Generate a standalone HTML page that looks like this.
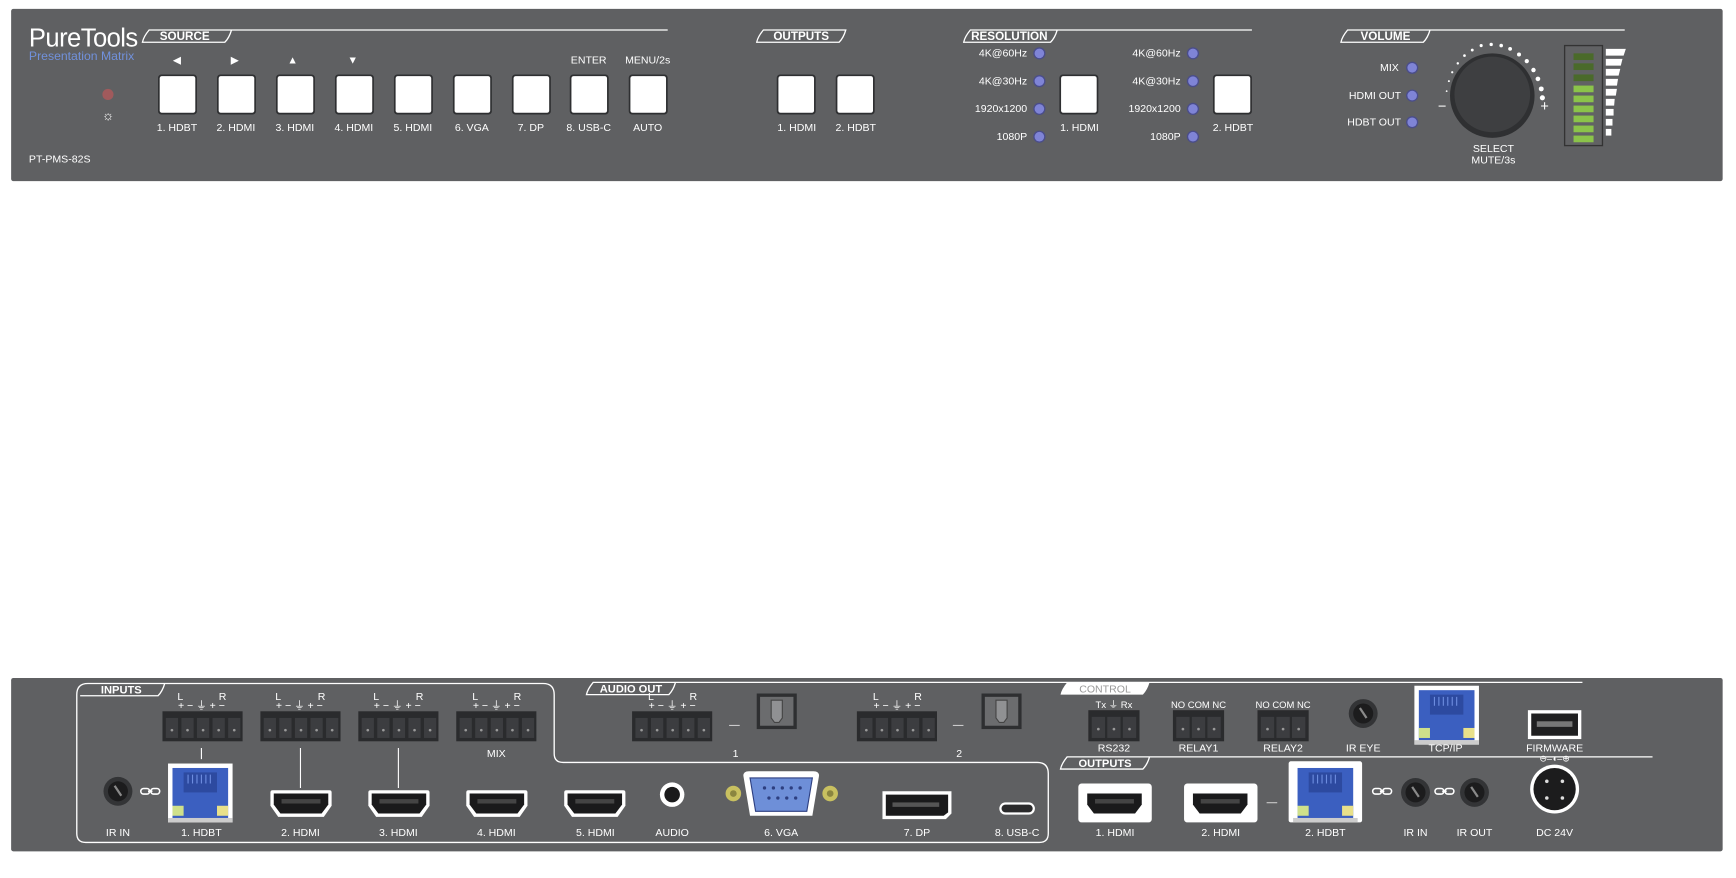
<!DOCTYPE html>
<html><head><meta charset="utf-8"><style>
html,body{margin:0;padding:0;background:#fff;width:1736px;height:878px;overflow:hidden}
svg{display:block}
text{font-family:"Liberation Sans",sans-serif;fill:#fff;font-size:9.5px;text-anchor:middle}
.b{font-weight:bold}
</style></head><body>
<svg width="1736" height="878" viewBox="0 0 1560 790" preserveAspectRatio="none" xmlns="http://www.w3.org/2000/svg">
<defs>
<g id="btn"><rect x="0" y="0" width="35" height="36" rx="3" fill="#2e2f31"/><rect x="1.5" y="1.5" width="32" height="33" rx="2" fill="#fff"/></g>
<g id="led"><circle r="5.5" fill="#4a4d8a"/><circle r="4.3" fill="#7f84d6"/></g>
<g id="term5"><rect x="0" y="0" width="72" height="27" fill="#2a2b2d"/>
<g fill="#3c3d40"><rect x="3" y="6" width="11" height="18"/><rect x="17" y="6" width="11" height="18"/><rect x="31" y="6" width="11" height="18"/><rect x="45" y="6" width="11" height="18"/><rect x="59" y="6" width="11" height="18"/></g>
<g fill="#999"><circle cx="8.5" cy="17" r="1.2"/><circle cx="22.5" cy="17" r="1.2"/><circle cx="36.5" cy="17" r="1.2"/><circle cx="50.5" cy="17" r="1.2"/><circle cx="64.5" cy="17" r="1.2"/></g></g>
<g id="term3"><rect x="0" y="0" width="46" height="28" fill="#2a2b2d"/>
<g fill="#3c3d40"><rect x="3" y="6" width="12" height="19"/><rect x="17" y="6" width="12" height="19"/><rect x="31" y="6" width="12" height="19"/></g>
<g fill="#999"><circle cx="9" cy="17" r="1.2"/><circle cx="23" cy="17" r="1.2"/><circle cx="37" cy="17" r="1.2"/></g></g>
<g id="hdmi"><path d="M0 2 Q0 0 2 0 H53 Q55 0 55 2 V14 L48 24 H7 L0 14 Z" fill="#fff"/><path d="M3 3 H52 V13 L46 21 H9 L3 13 Z" fill="#1a1a1b"/><rect x="10" y="8" width="35" height="4" fill="#444"/></g>
<g id="jack"><circle r="13" fill="#333436"/><circle r="9" fill="#1c1c1d"/><path d="M-3 -5 L3 4" stroke="#8a8a8a" stroke-width="2"/></g>
<g id="rj"><rect x="0" y="0" width="58" height="53" fill="#fff"/><rect x="4" y="4" width="50" height="45" fill="#3b5fc0"/><rect x="14" y="8" width="30" height="18" fill="#2d4aa0"/><g stroke="#6d8de0" stroke-width="1"><path d="M18 10v8M22 10v8M26 10v8M30 10v8M34 10v8M38 10v8"/></g><rect x="4" y="38" width="10" height="9" fill="#cfe08a"/><rect x="44" y="38" width="10" height="9" fill="#e8e08a"/><rect x="0" y="49" width="58" height="4" fill="#ccc"/></g>
<g id="link"><path d="M-6 -2.5 h3 a2.5 2.5 0 0 1 0 5 h-3 a2.5 2.5 0 0 1 0 -5 M3 -2.5 h3 a2.5 2.5 0 0 1 0 5 h-3 a2.5 2.5 0 0 1 0 -5 M-2 0 h4" stroke="#fff" stroke-width="1.4" fill="none"/></g>
<g id="opt"><rect x="0" y="0" width="36" height="32" fill="#2e2f31"/><rect x="3" y="3" width="30" height="26" fill="#6b6c6e"/><path d="M13 6 h10 v16 l-3 4 h-4 l-3 -4z" fill="#909193" stroke="#444" stroke-width="1"/></g>
</defs>

<!-- TOP PANEL -->
<rect x="10" y="8" width="1538" height="155" rx="2" fill="#5f6062"/>
<text x="26" y="42" style="font-size:23px;text-anchor:start;letter-spacing:-0.5px">PureTools</text>
<text x="26" y="54" style="font-size:11px;text-anchor:start;fill:#7191dc">Presentation Matrix</text>
<g stroke="#fff" stroke-width="1.2" fill="none">
<path d="M134 27 Q129 33 128 38 H202 Q206 34 208 27 Z M208 27 H600"/>
<path d="M686 27 Q681 33 680 38 H754 Q758 34 760 27 Z"/>
<path d="M872 27 Q867 33 866 38 H944 Q948 34 950 27 Z M950 27 H1125"/>
<path d="M1211 27 Q1206 33 1205 38 H1279 Q1283 34 1285 27 Z M1285 27 H1460"/>
</g>
<text class="b" x="166" y="36" style="font-size:10.5px">SOURCE</text>
<text class="b" x="720" y="36" style="font-size:10.5px">OUTPUTS</text>
<text class="b" x="907" y="36" style="font-size:10.5px">RESOLUTION</text>
<text class="b" x="1245" y="36" style="font-size:10.5px">VOLUME</text>
<text x="159" y="57">◀</text><text x="211" y="57">▶</text><text x="263" y="57">▲</text><text x="317" y="57">▼</text>
<text x="529" y="57">ENTER</text><text x="582" y="57">MENU/2s</text>
<use href="#btn" x="142" y="67"/><use href="#btn" x="195" y="67"/><use href="#btn" x="248" y="67"/><use href="#btn" x="301" y="67"/><use href="#btn" x="354" y="67"/><use href="#btn" x="407" y="67"/><use href="#btn" x="460" y="67"/><use href="#btn" x="512" y="67"/><use href="#btn" x="565" y="67"/>
<text x="159" y="118">1. HDBT</text><text x="212" y="118">2. HDMI</text><text x="265" y="118">3. HDMI</text><text x="318" y="118">4. HDMI</text><text x="371" y="118">5. HDMI</text><text x="424" y="118">6. VGA</text><text x="477" y="118">7. DP</text><text x="529" y="118">8. USB-C</text><text x="582" y="118">AUTO</text>
<circle cx="97" cy="85" r="5" fill="#a05a5c"/>
<text x="97" y="108" style="font-size:12px">☼</text>
<text x="26" y="146" style="text-anchor:start">PT-PMS-82S</text>
<use href="#btn" x="698" y="67"/><use href="#btn" x="751" y="67"/>
<text x="716" y="118">1. HDMI</text><text x="769" y="118">2. HDBT</text>
<text x="923" y="51" style="text-anchor:end">4K@60Hz</text><text x="923" y="76" style="text-anchor:end">4K@30Hz</text><text x="923" y="101" style="text-anchor:end">1920x1200</text><text x="923" y="126" style="text-anchor:end">1080P</text>
<text x="1061" y="51" style="text-anchor:end">4K@60Hz</text><text x="1061" y="76" style="text-anchor:end">4K@30Hz</text><text x="1061" y="101" style="text-anchor:end">1920x1200</text><text x="1061" y="126" style="text-anchor:end">1080P</text>
<use href="#led" x="934" y="48"/><use href="#led" x="934" y="73"/><use href="#led" x="934" y="98"/><use href="#led" x="934" y="123"/>
<use href="#led" x="1072" y="48"/><use href="#led" x="1072" y="73"/><use href="#led" x="1072" y="98"/><use href="#led" x="1072" y="123"/>
<use href="#btn" x="952" y="67"/><use href="#btn" x="1090" y="67"/>
<text x="970" y="118">1. HDMI</text><text x="1108" y="118">2. HDBT</text>
<text x="1257" y="64" style="text-anchor:end">MIX</text><text x="1259" y="89" style="text-anchor:end">HDMI OUT</text><text x="1259" y="113" style="text-anchor:end">HDBT OUT</text>
<use href="#led" x="1269" y="61"/><use href="#led" x="1269" y="86"/><use href="#led" x="1269" y="110"/>
<g fill="#fff"><circle cx="1300" cy="82" r="0.8"/><circle cx="1302" cy="73" r="0.9"/><circle cx="1305" cy="65" r="1"/><circle cx="1310" cy="57" r="1.1"/><circle cx="1316" cy="50" r="1.2"/><circle cx="1323" cy="45" r="1.3"/><circle cx="1331" cy="41" r="1.4"/><circle cx="1340" cy="40" r="1.5"/><circle cx="1349" cy="41" r="1.6"/><circle cx="1357" cy="44" r="1.7"/><circle cx="1365" cy="49" r="1.8"/><circle cx="1372" cy="55" r="1.9"/><circle cx="1378" cy="63" r="2"/><circle cx="1382" cy="71" r="2.1"/><circle cx="1385" cy="80" r="2.2"/><circle cx="1386" cy="88" r="2.3"/></g>
<circle cx="1341" cy="86" r="38" fill="#2f3032"/><circle cx="1341" cy="85" r="34" fill="#3e3f41"/>
<text x="1296" y="100" style="font-size:13px">−</text><text x="1388" y="100" style="font-size:13px">+</text>
<text x="1342" y="137">SELECT</text><text x="1342" y="147">MUTE/3s</text>
<rect x="1406" y="41" width="34" height="90" fill="#616264" stroke="#333" stroke-width="1.2"/>
<g fill="#4a6a2a"><rect x="1414" y="48" width="18" height="6"/><rect x="1414" y="57" width="18" height="6"/><rect x="1414" y="67" width="18" height="6"/></g>
<g fill="#8bc34a"><rect x="1414" y="77" width="18" height="6"/><rect x="1414" y="86" width="18" height="6"/><rect x="1414" y="95" width="18" height="6"/><rect x="1414" y="104" width="18" height="6"/><rect x="1414" y="113" width="18" height="6"/><rect x="1414" y="122" width="18" height="6"/></g>
<g fill="#fff"><path d="M1443 44h18l-2 6h-16z"/><path d="M1443 53h15l-1.5 6h-13.5z"/><path d="M1443 62h13l-1.5 6h-11.5z"/><path d="M1443 71h11l-1 6h-10z"/><path d="M1443 80h10l-1 6h-9z"/><path d="M1443 89h8l-.5 6h-7.5z"/><path d="M1443 98h7v6h-7z"/><path d="M1443 107h6v6h-6z"/><path d="M1443 116h5v6h-5z"/></g>

<!-- BOTTOM PANEL -->
<rect x="10" y="610" width="1538" height="156" rx="2" fill="#5f6062"/>
<g stroke="#fff" stroke-width="1.2" fill="none">
<path d="M148 615 H488 Q498 615 498 625 V678 Q498 686 506 686 H932 Q942 686 942 696 V750 Q942 758 934 758 H77 Q69 758 69 750 V625 Q69 615 79 615 H148 Q146 622 142 626 H72"/>
<path d="M533 614 Q528 620 527 625 H601 Q605 621 607 614 Z M607 614 H1422"/>
<path d="M959 681 Q954 687 953 692 H1027 Q1031 688 1033 681 Z M1033 681 H1485"/>
</g>
<text class="b" x="109" y="624" style="font-size:10px">INPUTS</text>
<text class="b" x="567" y="623" style="font-size:10px">AUDIO OUT</text>
<path d="M959 614 Q954 620 953 625 H1027 Q1031 621 1033 614 Z" fill="#fff"/>
<text x="993" y="623" style="fill:#999;font-size:9.5px">CONTROL</text>
<text class="b" x="993" y="690" style="font-size:10px">OUTPUTS</text>
<g style="font-size:9px"><text x="181" y="638">+ − ⏚ + −</text><text x="269" y="638">+ − ⏚ + −</text><text x="357" y="638">+ − ⏚ + −</text><text x="446" y="638">+ − ⏚ + −</text><text x="604" y="638">+ − ⏚ + −</text><text x="806" y="638">+ − ⏚ + −</text></g>
<g style="font-size:8px"><text x="162" y="630">L</text><text x="200" y="630">R</text><text x="250" y="630">L</text><text x="289" y="630">R</text><text x="338" y="630">L</text><text x="377" y="630">R</text><text x="427" y="630">L</text><text x="465" y="630">R</text><text x="585" y="630">L</text><text x="623" y="630">R</text><text x="787" y="630">L</text><text x="825" y="630">R</text></g>
<use href="#term5" x="146" y="640"/><use href="#term5" x="234" y="640"/><use href="#term5" x="322" y="640"/><use href="#term5" x="410" y="640"/><use href="#term5" x="568" y="640"/><use href="#term5" x="770" y="640"/>
<use href="#opt" x="680" y="624"/><use href="#opt" x="882" y="624"/>
<text x="660" y="655">—</text><text x="861" y="655">—</text>
<text x="661" y="681">1</text><text x="862" y="681">2</text><text x="446" y="681">MIX</text>
<g stroke="#fff" stroke-width="1"><path d="M181 673v10M270 673v36M358 673v36"/></g>
<use href="#jack" x="106" y="712"/><use href="#link" x="135" y="712"/>
<use href="#rj" x="151" y="687"/>
<use href="#hdmi" x="243" y="711"/><use href="#hdmi" x="331" y="711"/><use href="#hdmi" x="419" y="711"/><use href="#hdmi" x="507" y="711"/>
<circle cx="604" cy="715" r="11" fill="#fff"/><circle cx="604" cy="715" r="7" fill="#1a1a1b"/>
<circle cx="659" cy="714" r="7" fill="#c8c060"/><circle cx="659" cy="714" r="3" fill="#8a8540"/><circle cx="746" cy="714" r="7" fill="#c8c060"/><circle cx="746" cy="714" r="3" fill="#8a8540"/>
<path d="M668 698 Q668 694 673 694 H731 Q736 694 736 698 L730 734 H674 Z" fill="#fff"/>
<path d="M674 700 H730 L725 730 H679 Z" fill="#6e8fd8" stroke="#2d3f80" stroke-width="1"/>
<g fill="#2d3f80"><circle cx="687" cy="709" r="1.5"/><circle cx="695" cy="709" r="1.5"/><circle cx="703" cy="709" r="1.5"/><circle cx="711" cy="709" r="1.5"/><circle cx="719" cy="709" r="1.5"/><circle cx="691" cy="718" r="1.5"/><circle cx="699" cy="718" r="1.5"/><circle cx="707" cy="718" r="1.5"/><circle cx="715" cy="718" r="1.5"/></g>
<path d="M793 712 H855 V732 L850 737 H793 Z" fill="#fff"/><path d="M796 715 H852 V731 L848 734 H796 Z" fill="#1a1a1b"/><rect x="802" y="722" width="42" height="4" fill="#555"/>
<rect x="898" y="722" width="32" height="11" rx="5.5" fill="#fff"/><rect x="900" y="724" width="28" height="7" rx="3.5" fill="#2a2a2b"/>
<text x="106" y="752">IR IN</text><text x="181" y="752">1. HDBT</text><text x="270" y="752">2. HDMI</text><text x="358" y="752">3. HDMI</text><text x="446" y="752">4. HDMI</text><text x="535" y="752">5. HDMI</text><text x="604" y="752">AUDIO</text><text x="702" y="752">6. VGA</text><text x="824" y="752">7. DP</text><text x="914" y="752">8. USB-C</text>
<text x="1001" y="637" style="font-size:8.5px">Tx ⏚ Rx</text><text x="1077" y="637" style="font-size:8.5px">NO COM NC</text><text x="1153" y="637" style="font-size:8.5px">NO COM NC</text>
<use href="#term3" x="978" y="639"/><use href="#term3" x="1054" y="639"/><use href="#term3" x="1130" y="639"/>
<text x="1001" y="676">RS232</text><text x="1077" y="676">RELAY1</text><text x="1153" y="676">RELAY2</text>
<use href="#jack" x="1225" y="642"/><text x="1225" y="676">IR EYE</text>
<use href="#rj" x="1271" y="617"/><text x="1299" y="676">TCP/IP</text>
<rect x="1373" y="639" width="48" height="26" fill="#fff"/><rect x="1376" y="642" width="42" height="20" fill="#1f1f20"/><rect x="1381" y="649" width="32" height="5" fill="#777"/>
<text x="1397" y="676">FIRMWARE</text>
<text x="1397" y="685" style="font-size:8px">⊖–◖–⊕</text>
<circle cx="1397" cy="710" r="22" fill="#fff"/><circle cx="1397" cy="710" r="19" fill="#1c1c1d"/>
<g fill="#ddd"><circle cx="1390" cy="703" r="1.6"/><circle cx="1404" cy="703" r="1.6"/><circle cx="1390" cy="718" r="1.6"/><circle cx="1404" cy="718" r="1.6"/></g>
<text x="1397" y="752">DC 24V</text>
<rect x="969" y="705" width="66" height="35" rx="3" fill="#fff"/><use href="#hdmi" x="974" y="711"/>
<rect x="1064" y="705" width="66" height="35" rx="3" fill="#fff"/><use href="#hdmi" x="1069" y="711"/>
<text x="1143" y="725">—</text>
<rect x="1158" y="685" width="66" height="55" rx="2" fill="#fff"/><use href="#rj" x="1162" y="687"/>
<use href="#link" x="1242" y="712"/><use href="#jack" x="1272" y="713"/><use href="#link" x="1298" y="712"/><use href="#jack" x="1325" y="713"/>
<text x="1002" y="752">1. HDMI</text><text x="1097" y="752">2. HDMI</text><text x="1191" y="752">2. HDBT</text><text x="1272" y="752">IR IN</text><text x="1325" y="752">IR OUT</text>
</svg>
</body></html>
